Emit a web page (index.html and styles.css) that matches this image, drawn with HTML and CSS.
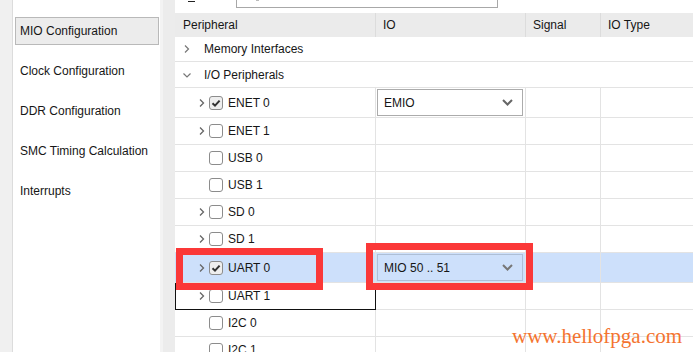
FILE: index.html
```html
<!DOCTYPE html>
<html>
<head>
<meta charset="utf-8">
<link rel="stylesheet" href="styles.css">
</head>
<body>
<div class="app">
  <div class="strip"></div>
  <nav class="nav">
    <div class="nav-item active">MIO Configuration</div>
    <div class="nav-item">Clock Configuration</div>
    <div class="nav-item">DDR Configuration</div>
    <div class="nav-item">SMC Timing Calculation</div>
    <div class="nav-item">Interrupts</div>
  </nav>
  <div class="splitter"></div>
  <main class="main">
    <div class="topbar">
      <span class="dash"></span>
      <span class="search"><span class="search-tick"></span></span>
    </div>
    <div class="table">
      <div class="row head">
        <div class="cell">Peripheral</div>
        <div class="cell">IO</div>
        <div class="cell">Signal</div>
        <div class="cell last">IO Type</div>
      </div>

      <div class="row group h25">
        <div class="tree">
          <svg class="chev" width="8" height="10" viewBox="0 0 8 10"><path d="M2 1.5 L5.5 5 L2 8.5" fill="none" stroke="#777" stroke-width="1.2"/></svg>
          <span>Memory Interfaces</span>
        </div>
      </div>
      <div class="row group h26">
        <div class="tree">
          <svg class="chev" width="8" height="10" viewBox="0 0 8 10"><path d="M0.5 3.5 L4 7 L7.5 3.5" fill="none" stroke="#777" stroke-width="1.2"/></svg>
          <span>I/O Peripherals</span>
        </div>
      </div>

      <div class="row h30">
        <div class="cell item">
          <svg class="chev" width="8" height="10" viewBox="0 0 8 10"><path d="M2 1.5 L5.5 5 L2 8.5" fill="none" stroke="#666" stroke-width="1.3"/></svg>
          <span class="cb checked"><svg width="12" height="12" viewBox="0 0 12 12"><path d="M2.5 6.2 L5 8.6 L9.6 3.6" fill="none" stroke="#333" stroke-width="2"/></svg></span>
          <span>ENET 0</span>
        </div>
        <div class="cell io">
          <div class="combo"><span>EMIO</span><svg width="11" height="7" viewBox="0 0 11 7"><path d="M1 1 L5.5 5.5 L10 1" fill="none" stroke="#666" stroke-width="2"/></svg></div>
        </div>
        <div class="cell"></div>
        <div class="cell last"></div>
      </div>

      <div class="row">
        <div class="cell item">
          <svg class="chev" width="8" height="10" viewBox="0 0 8 10"><path d="M2 1.5 L5.5 5 L2 8.5" fill="none" stroke="#666" stroke-width="1.3"/></svg>
          <span class="cb"></span><span>ENET 1</span>
        </div>
        <div class="cell"></div><div class="cell"></div><div class="cell last"></div>
      </div>
      <div class="row">
        <div class="cell item"><span class="nochev"></span><span class="cb"></span><span>USB 0</span></div>
        <div class="cell"></div><div class="cell"></div><div class="cell last"></div>
      </div>
      <div class="row">
        <div class="cell item"><span class="nochev"></span><span class="cb"></span><span>USB 1</span></div>
        <div class="cell"></div><div class="cell"></div><div class="cell last"></div>
      </div>
      <div class="row">
        <div class="cell item">
          <svg class="chev" width="8" height="10" viewBox="0 0 8 10"><path d="M2 1.5 L5.5 5 L2 8.5" fill="none" stroke="#666" stroke-width="1.3"/></svg>
          <span class="cb"></span><span>SD 0</span>
        </div>
        <div class="cell"></div><div class="cell"></div><div class="cell last"></div>
      </div>
      <div class="row">
        <div class="cell item">
          <svg class="chev" width="8" height="10" viewBox="0 0 8 10"><path d="M2 1.5 L5.5 5 L2 8.5" fill="none" stroke="#666" stroke-width="1.3"/></svg>
          <span class="cb"></span><span>SD 1</span>
        </div>
        <div class="cell"></div><div class="cell"></div><div class="cell last"></div>
      </div>
      <div class="row h30 selected">
        <div class="cell item">
          <svg class="chev" width="8" height="10" viewBox="0 0 8 10"><path d="M2 1.5 L5.5 5 L2 8.5" fill="none" stroke="#666" stroke-width="1.3"/></svg>
          <span class="cb checked"><svg width="12" height="12" viewBox="0 0 12 12"><path d="M2.5 6.2 L5 8.6 L9.6 3.6" fill="none" stroke="#333" stroke-width="2"/></svg></span>
          <span>UART 0</span>
        </div>
        <div class="cell io">
          <div class="combo sel"><span>MIO 50 .. 51</span><svg width="11" height="7" viewBox="0 0 11 7"><path d="M1 1 L5.5 5.5 L10 1" fill="none" stroke="#777" stroke-width="2"/></svg></div>
        </div>
        <div class="cell"></div>
        <div class="cell last"></div>
      </div>
      <div class="row focus">
        <div class="cell item">
          <svg class="chev" width="8" height="10" viewBox="0 0 8 10"><path d="M2 1.5 L5.5 5 L2 8.5" fill="none" stroke="#666" stroke-width="1.3"/></svg>
          <span class="cb"></span><span>UART 1</span>
        </div>
        <div class="cell"></div><div class="cell"></div><div class="cell last"></div>
      </div>
      <div class="row">
        <div class="cell item"><span class="nochev"></span><span class="cb"></span><span>I2C 0</span></div>
        <div class="cell"></div><div class="cell"></div><div class="cell last"></div>
      </div>
      <div class="row">
        <div class="cell item"><span class="nochev"></span><span class="cb"></span><span>I2C 1</span></div>
        <div class="cell"></div><div class="cell"></div><div class="cell last"></div>
      </div>
    </div>
  </main>
</div>
<div class="mark mark-a"></div>
<div class="mark mark-b"></div>
<div class="watermark">www.hellofpga.com</div>
</body>
</html>
```

FILE: styles.css
```css
html, body {
  margin: 0;
  padding: 0;
  width: 693px;
  height: 352px;
  overflow: hidden;
  background: #f0f0f0;
  font-family: "Liberation Sans", Arial, sans-serif;
  font-size: 12px;
  color: #161616;
}

.app {
  display: flex;
  height: 352px;
  overflow: hidden;
}

.strip {
  width: 12px;
  flex-shrink: 0;
  background: #f0f0f0;
  border-right: 1px solid #dcdcdc;
}

.nav {
  width: 147px;
  flex-shrink: 0;
  background: #ffffff;
  padding: 17px 0 0 2px;
  box-sizing: border-box;
  display: flex;
  flex-direction: column;
  gap: 12px;
}

.nav-item {
  width: 144px;
  height: 28px;
  flex-shrink: 0;
  box-sizing: border-box;
  padding-left: 4px;
  display: flex;
  align-items: center;
  border: 1px solid transparent;
}

.nav-item.active {
  background: #ececec;
  border-color: #b9b9b9;
}

.splitter {
  width: 15px;
  flex-shrink: 0;
  background: #ececec;
  border-left: 3px solid #f3f3f3;
  box-sizing: border-box;
}

.main {
  flex: 1;
  min-height: 0;
  background: #ffffff;
  display: flex;
  flex-direction: column;
}

.topbar {
  height: 13px;
  flex-shrink: 0;
  display: flex;
  align-items: flex-start;
}

.dash {
  display: block;
  width: 7px;
  height: 1px;
  background: #222;
  margin: 1px 0 0 13px;
}

.search {
  display: block;
  position: relative;
  width: 262px;
  height: 9px;
  margin: -1px 0 0 41px;
  box-sizing: border-box;
  border: 1px solid #a8a8a8;
}

.search-tick {
  position: absolute;
  left: 19px;
  top: 0;
  width: 3px;
  height: 1px;
  background: #bbb;
}

.table {
  flex-shrink: 0;
  display: flex;
  flex-direction: column;
}

.row {
  display: grid;
  grid-template-columns: 201px 150px 75px 1fr;
  height: 27px;
  flex-shrink: 0;
  box-sizing: border-box;
  border-bottom: 1px solid #e3e3e3;
}

.row.head {
  height: 24px;
  background: #ebebeb;
  border-bottom: none;
}

.row.head .cell {
  padding-left: 7px;
  border-right-color: #dcdcdc;
}

.row.head .cell:first-child {
  padding-left: 8px;
}

.row.group {
  display: flex;
}

.h25 { height: 25px; }
.h26 { height: 26px; }
.h30 { height: 30px; }

.cell {
  display: flex;
  align-items: center;
  border-right: 1px solid #e3e3e3;
  min-width: 0;
}

.cell.last {
  border-right: none;
}

.tree {
  display: flex;
  align-items: center;
  padding-left: 8px;
}

.tree .chev {
  margin-right: 13px;
}

.item {
  padding-left: 23px;
}

.item .chev {
  margin-right: 3px;
}

.nochev {
  display: inline-block;
  width: 11px;
}

.cb {
  display: inline-flex;
  align-items: center;
  justify-content: center;
  width: 14px;
  height: 14px;
  box-sizing: border-box;
  border: 1px solid #8c8c8c;
  border-radius: 3px;
  background: #fff;
  margin-right: 5px;
}

.cb.checked {
  background: #eeeeee;
}

.io {
  padding: 1px 2px 1px 1px;
  align-items: stretch;
}

.combo {
  flex: 1;
  display: flex;
  align-items: center;
  justify-content: space-between;
  border: 1px solid #ababab;
  background: #fff;
  padding: 0 9px 0 6px;
}

.combo.sel {
  background: #cde0fb;
  border-color: #aebfd6;
}

.selected {
  background: #cde0fb;
}

.focus {
  position: relative;
}

.focus::after {
  content: "";
  position: absolute;
  left: 0;
  top: 0;
  width: 201px;
  height: 27px;
  box-sizing: border-box;
  border: 1px solid #111;
  border-top: none;
}

.mark {
  position: absolute;
  box-sizing: border-box;
  border: 7.5px solid #fb3838;
}

.mark-a {
  left: 176px;
  top: 248px;
  width: 147px;
  height: 42px;
}

.mark-b {
  left: 366px;
  top: 243px;
  width: 167px;
  height: 47px;
}

.watermark {
  position: absolute;
  left: 512px;
  top: 324px;
  font-family: "Liberation Serif", "Times New Roman", serif;
  font-size: 21px;
  line-height: 24px;
  color: #f47430;
}
```
